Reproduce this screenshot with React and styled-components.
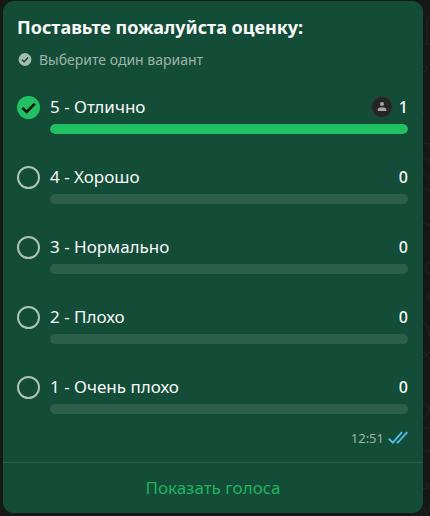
import React, { useState } from 'react'
import styled, { createGlobalStyle } from 'styled-components'

const GlobalStyle = createGlobalStyle`
  * {
    box-sizing: border-box;
  }

  body {
    margin: 0;
    background-color: #161717;
    color: #f7f8f8;
    font-family: "Noto Sans", "Open Sans", sans-serif;
    -webkit-font-smoothing: antialiased;
  }
`

const Chat = styled.main`
  position: relative;
  min-height: 100vh;
  padding: 1px 7px 2px 3px;
`

const Wallpaper = styled.svg`
  position: absolute;
  top: 0;
  right: 0;
  width: 430px;
  height: 516px;
  fill: none;
  stroke: #262727;
`

const Bubble = styled.form`
  position: relative;
  background-color: #144d37;
  border-radius: 11px;
  overflow: hidden;
`

const Body = styled.fieldset`
  margin: 0;
  min-width: 0;
  border: 0;
  padding: 0 15px 15px 14px;
`

const Title = styled.legend`
  padding: 13px 0 0;
  font-size: 18px;
  font-weight: 700;
  line-height: 26px;
`

const Hint = styled.p`
  display: flex;
  align-items: center;
  gap: 7px;
  margin: 10px 0 25px;
  font-size: 14px;
  line-height: 20px;
  color: #9db3aa;
`

const Options = styled.div`
  display: grid;
  gap: 31px;
`

const Option = styled.div`
  display: grid;
  grid-template-columns: 23px 1fr;
  column-gap: 10px;
  row-gap: 5px;
`

const RadioBox = styled.span`
  display: grid;
  place-items: center;

  > * {
    grid-area: 1 / 1;
  }

  svg {
    pointer-events: none;
  }
`

const Radio = styled.input`
  appearance: none;
  width: 23px;
  height: 23px;
  margin: 0;
  border: 2px solid #afc2ba;
  border-radius: 50%;
  cursor: pointer;

  &:checked {
    border-color: #21c063;
    background-color: #21c063;
  }
`

const Line = styled.div`
  display: flex;
  align-items: center;
  gap: 6px;
  font-size: 17px;
  line-height: 24px;
`

const Label = styled.label`
  flex: 1;
  cursor: pointer;
`

const Votes = styled.span`
  font-size: 16px;
  font-weight: 500;
`

const Track = styled.div`
  grid-column: 2;
  height: 10px;
  border-radius: 5px;
  background-color: #2c5f4b;
  overflow: hidden;
`

const Fill = styled.div`
  height: 100%;
  border-radius: 5px;
  background-color: #21c063;
`

const Meta = styled.div`
  display: flex;
  justify-content: flex-end;
  align-items: center;
  gap: 4px;
  margin-top: 15px;
  font-size: 13px;
  line-height: 18px;
  color: #9db3aa;
`

const ShowVotes = styled.button`
  display: block;
  width: 100%;
  padding: 13px 15px;
  border: 0;
  border-top: 1px solid #2c5f4b;
  background: none;
  color: #21b25c;
  font-family: inherit;
  font-size: 17px;
  line-height: 24px;
  cursor: pointer;
`

const options = [
  { value: '5', text: '5 - Отлично', votes: 1 },
  { value: '4', text: '4 - Хорошо', votes: 0 },
  { value: '3', text: '3 - Нормально', votes: 0 },
  { value: '2', text: '2 - Плохо', votes: 0 },
  { value: '1', text: '1 - Очень плохо', votes: 0 },
]

const HintIcon = () => (
  <svg width="15" height="14" viewBox="0 0 15 14" aria-hidden="true">
    <circle cx="8" cy="6.5" r="6.4" fill="#a5bab1" />
    <path d="M5 6.7l2.1 2.1 4-4.2" fill="none" stroke="#144d37" strokeWidth="1.5" />
  </svg>
)

const Check = () => (
  <svg width="23" height="23" viewBox="0 0 23 23" aria-hidden="true">
    <path d="M5.4 11.8l4.2 4.2 8.3-8.4" fill="none" stroke="#0b1410" strokeWidth="2.6" />
  </svg>
)

const Avatar = () => (
  <svg width="22" height="22" viewBox="0 0 22 22" aria-hidden="true">
    <circle cx="11" cy="11" r="10.3" fill="#242626" stroke="#373435" />
    <circle cx="11" cy="8" r="2.1" fill="#a4a5a5" />
    <path d="M6.7 15v-1.4c0-1.5 2.2-2.3 4.3-2.3s4.3.8 4.3 2.3V15z" fill="#a4a5a5" />
  </svg>
)

const ReadTicks = () => (
  <svg width="20" height="14" viewBox="0 0 20 14" fill="none" stroke="#53bdeb" strokeWidth="1.8" role="img" aria-label="Прочитано">
    <path d="M.8 7.6l4 4L14 1.2" />
    <path d="M8.6 10.6l1.2 1L19.2 1.2" />
  </svg>
)

const App = () => {
  const [selected, setSelected] = useState('5')
  const total = options.reduce((sum, o) => sum + o.votes, 0)

  return (
    <Chat>
      <GlobalStyle />
      <Wallpaper viewBox="0 0 430 516" aria-hidden="true">
        <path d="M422 44h5V18h3M427 35h3" />
        <circle cx="424" cy="69" r="3" />
        <path d="M421 104q4 8 0 18M422 144q4-2 8 1M422 157l8 4M422 172l8 6M422 187l8 4M422 222l8 4" />
        <path d="M430 263h-4v10h4M430 292q-5 3 0 9M422 320q5 2 8 18M422 350l8 9M422 359l8-8" />
        <path d="M420 402q9 2 9 8t-9 8M420 428h10M420 444q3 8 10 8" />
        <circle cx="425" cy="486" r="3" />
        <path d="M420 516l4-9 3 8 3-7" />
      </Wallpaper>
      <Bubble onSubmit={(e) => e.preventDefault()}>
        <Body>
          <Title>Поставьте пожалуйста оценку:</Title>
          <Hint>
            <HintIcon />
            Выберите один вариант
          </Hint>
          <Options>
            {options.map((o) => (
              <Option key={o.value}>
                <RadioBox>
                  <Radio
                    type="radio"
                    name="rating"
                    id={`rating-${o.value}`}
                    value={o.value}
                    checked={selected === o.value}
                    onChange={() => setSelected(o.value)}
                  />
                  {selected === o.value && <Check />}
                </RadioBox>
                <Line>
                  <Label htmlFor={`rating-${o.value}`}>{o.text}</Label>
                  {o.votes > 0 && <Avatar />}
                  <Votes>{o.votes}</Votes>
                </Line>
                <Track>
                  <Fill style={{ width: `${(o.votes / total) * 100}%` }} />
                </Track>
              </Option>
            ))}
          </Options>
          <Meta>
            <time>12:51</time>
            <ReadTicks />
          </Meta>
        </Body>
        <ShowVotes type="button">Показать голоса</ShowVotes>
      </Bubble>
    </Chat>
  )
}

export default App
